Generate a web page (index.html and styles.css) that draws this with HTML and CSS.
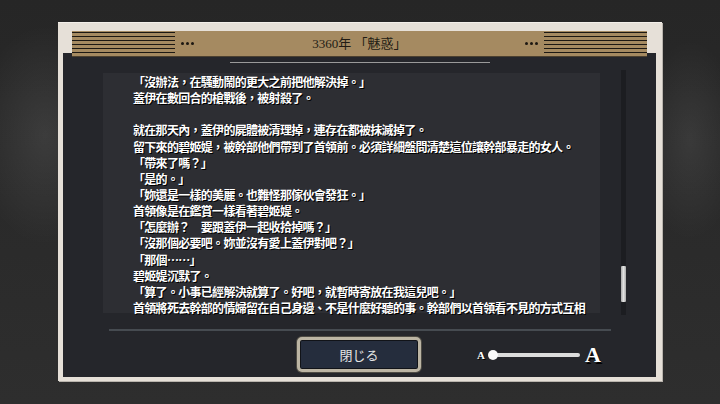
FILE: index.html
```html
<!DOCTYPE html>
<html lang="zh-Hant">
<head>
<meta charset="utf-8">
<title>3360年 「魅惑」</title>
<link rel="stylesheet" href="styles.css">
</head>
<body>
<div class="frame">
  <div class="header">
    <div class="stripes"></div>
    <div class="dots"><i></i><i></i><i></i></div>
    <div class="title">3360年 「魅惑」</div>
    <div class="dots"><i></i><i></i><i></i></div>
    <div class="stripes"></div>
  </div>
  <div class="panel">
    <div class="sep-top"></div>
    <div class="middle">
      <div class="story">
        <p>「沒辦法，在騷動鬧的更大之前把他解決掉。」</p>
        <p>蓋伊在數回合的槍戰後，被射殺了。</p>
        <p class="blank"></p>
        <p>就在那天內，蓋伊的屍體被清理掉，連存在都被抹滅掉了。</p>
        <p>留下來的碧姬媞，被幹部他們帶到了首領前。必須詳細盤問清楚這位讓幹部暴走的女人。</p>
        <p>「帶來了嗎？」</p>
        <p>「是的。」</p>
        <p>「妳還是一樣的美麗。也難怪那傢伙會發狂。」</p>
        <p>首領像是在鑑賞一樣看著碧姬媞。</p>
        <p>「怎麼辦？　要跟蓋伊一起收拾掉嗎？」</p>
        <p>「沒那個必要吧。妳並沒有愛上蓋伊對吧？」</p>
        <p>「那個……」</p>
        <p>碧姬媞沉默了。</p>
        <p>「算了。小事已經解決就算了。好吧，就暫時寄放在我這兒吧。」</p>
        <p>首領將死去幹部的情婦留在自己身邊、不是什麼好聽的事。幹部們以首領看不見的方式互相</p>
      </div>
      <div class="scrollbar"><div class="thumb"></div></div>
    </div>
    <div class="sep-bottom"></div>
    <div class="bottom">
      <button class="close">閉じる</button>
      <div class="slider">
        <span class="a-small">A</span>
        <span class="knob"></span>
        <span class="track"></span>
        <span class="a-big">A</span>
      </div>
    </div>
  </div>
</div>
</body>
</html>
```
FILE: styles.css
```css
* { box-sizing: border-box; }
html, body { margin: 0; padding: 0; }
body {
  width: 720px;
  height: 404px;
  overflow: hidden;
  padding-top: 22px;
  background:
    radial-gradient(ellipse 70px 110px at 45px 135px, rgba(255,255,255,0.09), rgba(255,255,255,0) 100%),
    radial-gradient(ellipse 50px 100px at 690px 140px, rgba(255,255,255,0.08), rgba(255,255,255,0) 100%),
    linear-gradient(#262626, #2e2e2e);
  font-family: "Noto Sans CJK JP", "Noto Sans CJK TC", sans-serif;
}
.frame {
  margin-left: 58px;
  width: 604px;
  height: 359px;
  background: #e6e0d8;
  border-top: 1px solid #f3efea;
  padding: 8px 6px 4px 5px;
  display: flex;
  flex-direction: column;
  box-shadow: 1px 1px 0 #b9b4ad;
}
.header {
  position: relative;
  z-index: 1;
  height: 26px;
  margin: 0 9px -4px 9px;
  background: #a58a61;
  display: flex;
  align-items: center;
  border-bottom: 1px solid #4b4030;
}
.stripes {
  width: 103px;
  height: 25px;
  background: repeating-linear-gradient(to bottom, #a58a61 0 1px, #1c1813 1px 2.5px, #a58a61 2.5px 4px);
  align-self: flex-start;
}
.dots {
  display: flex;
  gap: 2px;
  margin: 0 6px;
}
.dots i {
  display: block;
  width: 3px;
  height: 3px;
  border-radius: 50%;
  background: #1b1711;
}
.title {
  flex: 1;
  text-align: center;
  font-family: "Liberation Serif", "Noto Sans CJK JP", serif;
  font-size: 13px;
  color: #221c14;
  line-height: 26px;
}
.panel {
  flex: 1;
  background: #25262b;
  display: flex;
  flex-direction: column;
}
.sep-top {
  width: 260px;
  height: 1px;
  background: #9a9a9a;
  margin: 9px 0 0 167px;
}
.middle {
  display: flex;
  align-items: flex-start;
  margin-top: 7px;
  padding-left: 40px;
}
.story {
  width: 497px;
  height: 240px;
  margin-top: 3px;
  padding: 1px 0 0 30px;
  background: #2d2e33;
  color: #ffffff;
  font-size: 12px;
  font-weight: 700;
  letter-spacing: -0.7px;
  line-height: 16.15px;
  text-shadow: 1px 1px 0 #000;
}
.story p {
  margin: 0;
  white-space: nowrap;
  height: 16.15px;
}
.scrollbar {
  width: 5px;
  height: 245px;
  margin-left: 21px;
  background: #1c1d21;
  display: flex;
  flex-direction: column;
  justify-content: flex-end;
  padding-bottom: 13px;
}
.thumb {
  height: 36px;
  background: linear-gradient(to right, #a9a9a9, #e2e2e2 50%, #a9a9a9);
  border-radius: 1px;
}
.sep-bottom {
  width: 502px;
  height: 2px;
  background: #464b51;
  margin: 14px 0 0 46px;
}
.bottom {
  display: flex;
  align-items: center;
  margin-top: 6px;
  padding-left: 234px;
}
.close {
  width: 124px;
  height: 35px;
  border: 3px solid #bcb5a4;
  border-radius: 5px;
  background: #252d3d;
  box-shadow: inset 0 0 0 1px #111318, 0 0 0 1px #4e4b44;
  color: #e6e6e6;
  font-family: "Noto Sans CJK JP", sans-serif;
  font-size: 13px;
  padding: 0;
}
.slider {
  display: flex;
  align-items: center;
  margin-left: 56px;
  color: #fff;
  font-family: "Liberation Serif", serif;
  font-weight: 700;
  text-shadow: 1px 1px 0 #000;
}
.a-small {
  font-size: 11px;
  line-height: 12px;
  margin-right: 3px;
}
.knob {
  width: 10px;
  height: 10px;
  border-radius: 50%;
  background: #fafafa;
  position: relative;
  z-index: 1;
}
.track {
  width: 84px;
  height: 4px;
  margin-left: -2px;
  background: #dcdcdc;
  border-radius: 2px;
}
.a-big {
  font-size: 22px;
  line-height: 22px;
  margin-left: 5px;
  text-shadow: 1.5px 1.5px 0 #000;
}
```
